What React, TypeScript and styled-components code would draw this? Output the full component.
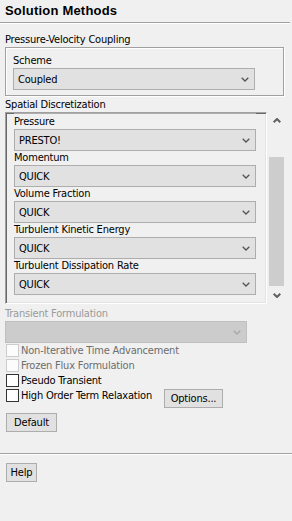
import styled, { createGlobalStyle } from "styled-components";

const GlobalStyle = createGlobalStyle`
  html, body {
    margin: 0;
    padding: 0;
    background: #f0f0f0;
  }
  body {
    font-family: "DejaVu Sans Condensed", "Liberation Sans", Arial, sans-serif;
    font-size: 11px;
    letter-spacing: -0.2px;
    color: #000;
  }
`;

const Panel = styled.div`
  width: 292px;
  height: 521px;
  display: flex;
  flex-direction: column;
  overflow: hidden;
`;

const Title = styled.div`
  height: 22px;
  margin-right: 2px;
  padding-left: 5px;
  line-height: 22px;
  font-family: "Liberation Sans", Arial, sans-serif;
  font-size: 13px;
  font-weight: bold;
  letter-spacing: 0.2px;
  border-bottom: 1px solid #a0a0a0;
  box-shadow: 0 1px 0 #fff;
`;

const SectionLabel = styled.div<{ $top: number; $disabled?: boolean }>`
  height: 15px;
  line-height: 15px;
  margin-top: ${(p) => p.$top}px;
  padding-left: 5px;
  color: ${(p) => (p.$disabled ? "#9a9a9a" : "#000")};
`;

const GroupBox = styled.div`
  box-sizing: border-box;
  width: 279px;
  height: 49px;
  margin-left: 5px;
  padding: 6px 0 0 7px;
  border: 1px solid #a0a0a0;
  box-shadow: 1px 1px 0 #fff, inset 1px 1px 0 #fff;
`;

const FieldLabel = styled.div`
  height: 14px;
  line-height: 14px;
`;

const Combo = styled.div<{ $disabled?: boolean; $clipped?: boolean }>`
  box-sizing: border-box;
  width: 242px;
  height: 22px;
  flex-shrink: 0;
  display: flex;
  align-items: center;
  justify-content: space-between;
  padding: 0 5px 0 4px;
  background: ${(p) => (p.$disabled ? "#cccccc" : "#e1e1e1")};
  border: 1px solid ${(p) => (p.$disabled ? "#bfbfbf" : "#adadad")};
  margin-top: ${(p) => (p.$clipped ? "-21px" : "0")};
  margin-bottom: ${(p) => (p.$clipped ? "1px" : "0")};
  margin-left: ${(p) => (p.$disabled ? "5px" : "0")};
`;

const ScrollRow = styled.div`
  display: flex;
  gap: 1px;
  margin-left: 5px;
  height: 192px;
`;

const Viewport = styled.div`
  box-sizing: border-box;
  width: 262px;
  height: 192px;
  overflow: hidden;
  padding-left: 8px;
  display: flex;
  flex-direction: column;
  border: 1px solid;
  border-color: #a0a0a0 #fff #fff #a0a0a0;
  box-shadow: inset 1px 1px 0 #696969, inset -1px -1px 0 #e3e3e3;
`;

const Scrollbar = styled.div`
  width: 17px;
  display: flex;
  flex-direction: column;
`;

const ArrowButton = styled.div`
  height: 17px;
  display: flex;
  align-items: center;
  justify-content: center;
`;

const Track = styled.div`
  flex: 1;
  padding-top: 28px;
`;

const Thumb = styled.div`
  height: 129px;
  margin: 0 1px;
  background: #cdcdcd;
`;

const CheckRow = styled.div<{ $tall?: boolean }>`
  display: flex;
  align-items: flex-start;
  height: ${(p) => (p.$tall ? 20 : 15)}px;
  padding-left: 6px;
`;

const CheckItem = styled.label<{ $disabled?: boolean; $width?: number }>`
  display: flex;
  align-items: center;
  gap: 2px;
  height: 15px;
  width: ${(p) => (p.$width ? `${p.$width}px` : "auto")};
  color: ${(p) => (p.$disabled ? "#6d6d6d" : "#000")};
  white-space: nowrap;
`;

const Box = styled.span<{ $disabled?: boolean }>`
  box-sizing: border-box;
  width: 13px;
  height: 13px;
  flex-shrink: 0;
  background: ${(p) => (p.$disabled ? "#fcfcfc" : "#fff")};
  border: 1px solid ${(p) => (p.$disabled ? "#cccccc" : "#333")};
`;

const Button = styled.button<{ $width: number; $top?: number; $left?: number }>`
  box-sizing: border-box;
  width: ${(p) => p.$width}px;
  height: 19px;
  margin-top: ${(p) => p.$top ?? 0}px;
  margin-left: ${(p) => p.$left ?? 0}px;
  padding: 0;
  background: #e1e1e1;
  border: 1px solid #adadad;
  font-family: "DejaVu Sans Condensed", "Liberation Sans", Arial, sans-serif;
  font-size: 11px;
  letter-spacing: -0.2px;
  color: #000;
  flex-shrink: 0;
`;

const Separator = styled.div`
  margin-top: 21px;
  height: 1px;
  background: #a0a0a0;
  box-shadow: 0 1px 0 #fff;
`;

function Chevron({ color = "#555", up = false, bold = false }: { color?: string; up?: boolean; bold?: boolean }) {
  return (
    <svg width="8" height="5" viewBox="0 0 8 5">
      <polyline
        points={up ? "0.7,4.3 4,1 7.3,4.3" : "0.7,0.7 4,4 7.3,0.7"}
        fill="none"
        stroke={color}
        strokeWidth={bold ? 2 : 1.3}
      />
    </svg>
  );
}

function Select({ value, disabled, clipped }: { value?: string; disabled?: boolean; clipped?: boolean }) {
  return (
    <Combo $disabled={disabled} $clipped={clipped}>
      <span>{value}</span>
      {!clipped && <Chevron color={disabled ? "#a8a8a8" : "#555"} />}
    </Combo>
  );
}

const discretization = [
  ["Pressure", "PRESTO!"],
  ["Momentum", "QUICK"],
  ["Volume Fraction", "QUICK"],
  ["Turbulent Kinetic Energy", "QUICK"],
  ["Turbulent Dissipation Rate", "QUICK"],
];

export default function App() {
  return (
    <>
      <GlobalStyle />
      <Panel>
        <Title>Solution Methods</Title>

        <SectionLabel $top={9}>Pressure-Velocity Coupling</SectionLabel>
        <GroupBox>
          <FieldLabel>Scheme</FieldLabel>
          <Select value="Coupled" />
        </GroupBox>

        <SectionLabel $top={1}>Spatial Discretization</SectionLabel>
        <ScrollRow>
          <Viewport>
            {/* row scrolled out of view, only its lower edge shows */}
            <Select clipped />
            {discretization.map(([label, value]) => (
              <div key={label}>
                <FieldLabel>{label}</FieldLabel>
                <Select value={value} />
              </div>
            ))}
          </Viewport>
          <Scrollbar>
            <ArrowButton>
              <Chevron up bold color="#606060" />
            </ArrowButton>
            <Track>
              <Thumb />
            </Track>
            <ArrowButton>
              <Chevron bold color="#606060" />
            </ArrowButton>
          </Scrollbar>
        </ScrollRow>

        <SectionLabel $top={2} $disabled>
          Transient Formulation
        </SectionLabel>
        <Select disabled />

        <CheckRow>
          <CheckItem $disabled>
            <Box $disabled />
            Non-Iterative Time Advancement
          </CheckItem>
        </CheckRow>
        <CheckRow>
          <CheckItem $disabled>
            <Box $disabled />
            Frozen Flux Formulation
          </CheckItem>
        </CheckRow>
        <CheckRow>
          <CheckItem>
            <Box />
            Pseudo Transient
          </CheckItem>
        </CheckRow>
        <CheckRow $tall>
          <CheckItem $width={158}>
            <Box />
            High Order Term Relaxation
          </CheckItem>
          <Button $width={59} $top={1}>
            Options...
          </Button>
        </CheckRow>

        <div>
          <Button $width={51} $top={5} $left={6}>
            Default
          </Button>
        </div>

        <Separator />

        <div>
          <Button $width={31} $top={9} $left={6}>
            Help
          </Button>
        </div>
      </Panel>
    </>
  );
}
